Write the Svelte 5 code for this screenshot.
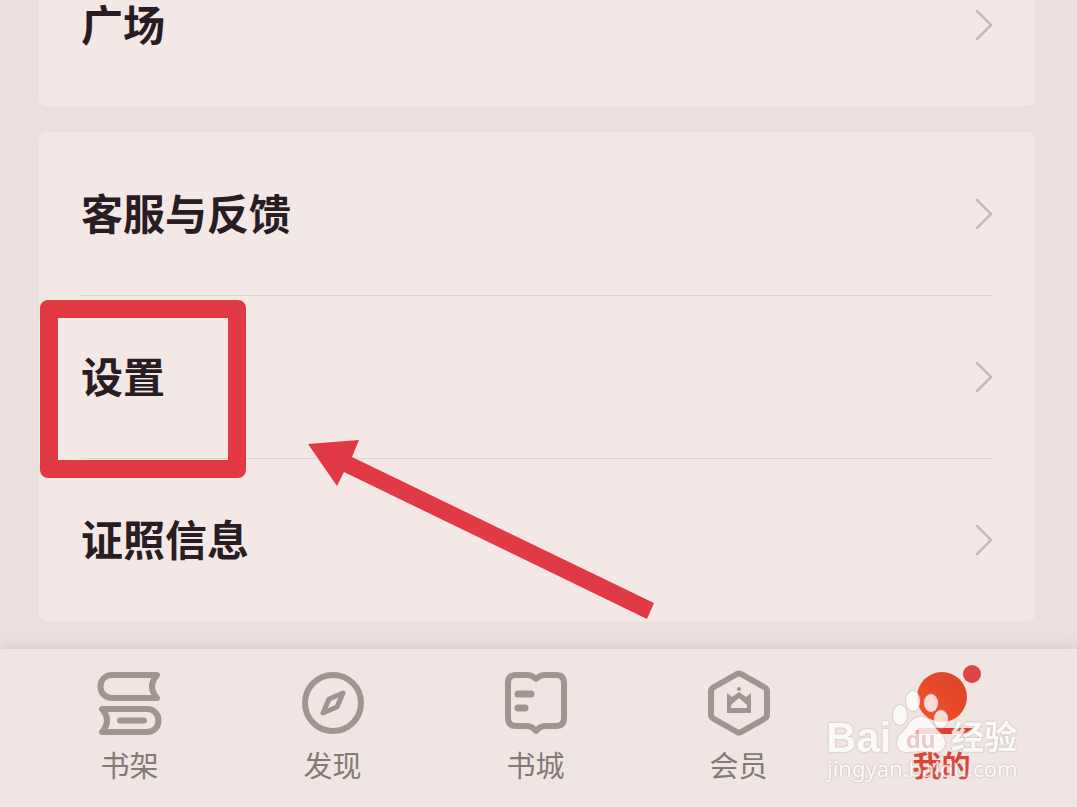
<script lang="ts">
	const groups = [['广场'], ['客服与反馈', '设置', '证照信息']];

	const tabs = [
		{ id: 'shelf', label: '书架' },
		{ id: 'discover', label: '发现' },
		{ id: 'store', label: '书城' },
		{ id: 'vip', label: '会员' },
		{ id: 'mine', label: '我的' }
	];

	const marked = '设置';
	let active = $state('mine');
</script>

<div class="page">
	<main class="content">
		{#each groups as group}
			<ul class="card">
				{#each group as item}
					<li class="item">
						<a class="row" href="#{item}">
							<span class="name">{item}</span>
							<svg class="chevron" viewBox="0 0 18 32" aria-hidden="true">
								<path d="M2 2 16 16 2 30" />
							</svg>
						</a>
						{#if item === marked}
							<div class="mark" aria-hidden="true"></div>
							<svg class="arrow" viewBox="0 0 346 180" aria-hidden="true">
								<path d="M0 4 51 0 44 17 346 163 339 179 36 32 29 46Z" />
							</svg>
						{/if}
					</li>
				{/each}
			</ul>
		{/each}
	</main>

	<nav class="tabbar">
		{#each tabs as tab}
			<button class="tab" class:active={active === tab.id} onclick={() => (active = tab.id)}>
				<svg class="icon" viewBox="0 0 64 64" aria-hidden="true">
					{#if tab.id === 'shelf'}
						<path d="M59 4H14C7 4 2.500 9 2.500 15.500S7 27 14 27h45q-10-11.500 0-23Z" />
						<path d="M4 38h45c7 0 11.500 5 11.500 11.500S56 61 49 61H4q10-11.500 0-23Z" />
						<path d="M22 49.500h24" />
					{:else if tab.id === 'discover'}
						<circle cx="32" cy="32" r="28" />
						<path class="thin" d="M42 22 28 28 22 42 36 36Z" />
					{:else if tab.id === 'store'}
						<path
							d="M12 4h11q5 0 9 4 4-4 9-4h11q8 0 8 8v35q0 8-8 8H41q-5 0-9 5-4-5-9-5H12q-8 0-8-8V12q0-8 8-8Z"
						/>
						<path class="bold" d="M14 23h13M14 37h7" />
					{:else if tab.id === 'vip'}
						<path d="M30 3q2-1 4 0l23 13q3 2 3 4v24q0 2-3 4L34 61q-2 1-4 0L7 48q-3-2-3-4V20q0-2 3-4Z" />
						<path
							class="crown"
							fill-rule="evenodd"
							d="M20 22l5 4 7-5 7 5 5-4v20H20ZM24 37h16v-3l-8-7-8 7Z"
						/>
						<circle class="dot" cx="32" cy="18" r="2" />
					{:else}
						<defs>
							<linearGradient id="sun" x1="1" y1="0" x2="0" y2="1">
								<stop offset="0" stop-color="#d9462a" />
								<stop offset="1" stop-color="#fa4d28" />
							</linearGradient>
						</defs>
						<circle class="head" cx="32" cy="26" r="25" fill="url(#sun)" />
						<path class="base" d="M8 57h50l5 0q-3 6-7 6H4Z" />
					{/if}
				</svg>
				<span>{tab.label}</span>
				{#if tab.id === 'mine'}
					<i class="badge"></i>
				{/if}
			</button>
		{/each}

		<svg class="watermark" viewBox="0 0 200 100" aria-hidden="true">
			<text class="brand" x="1" y="61">Bai</text>
			<g class="paw">
				<ellipse cx="75" cy="24" rx="7" ry="10" />
				<ellipse cx="88" cy="10" rx="7" ry="10" />
				<ellipse cx="106" cy="12" rx="7" ry="9" />
				<ellipse cx="116" cy="28" rx="7" ry="9" />
				<path
					d="M96 26c7 0 10 4 13 9 4 6 11 9 11 17 0 7-6 10-12 9-8-1-16-1-24 0-7 1-12-3-12-9 0-8 7-11 11-17 3-5 6-9 13-9Z"
				/>
			</g>
			<text class="du" x="81" y="57">du</text>
			<text class="cn" x="126" y="58">经验</text>
			<text class="url" x="2" y="86">jingyan.baidu.com</text>
		</svg>
	</nav>
</div>

<style>
	:global(body) {
		margin: 0;
		background: #ece0df;
	}

	.page {
		display: flex;
		flex-direction: column;
		min-height: 100vh;
		overflow: hidden;
		font-family: 'Noto Sans CJK SC', sans-serif;
		background: #ece0df;
	}

	/* list is scrolled, so the first card starts above the window */
	.content {
		display: flex;
		flex: 1;
		flex-direction: column;
		gap: 26px;
		margin-top: -57px;
		padding: 0 42px 28px 39px;
	}

	.card {
		margin: 0;
		padding: 0;
		list-style: none;
		border-radius: 8px;
		background: #f4e8e6;
	}

	.item {
		position: relative;
		padding: 0 42px;
	}

	.row {
		display: flex;
		align-items: center;
		justify-content: space-between;
		box-sizing: border-box;
		height: 163px;
		font-size: 42px;
		font-weight: 700;
		line-height: 60px;
		color: #291c22;
		text-decoration: none;
	}

	.item + .item .row {
		border-top: 1px solid #dfd3d1;
	}

	.name {
		padding-bottom: 4px;
	}

	.chevron {
		width: 18px;
		height: 32px;
		fill: none;
		stroke: #c5bab8;
		stroke-width: 2.5;
		stroke-linecap: round;
		stroke-linejoin: round;
	}

	.mark {
		position: absolute;
		top: 5px;
		left: 1px;
		z-index: 1;
		box-sizing: border-box;
		width: 206px;
		height: 178px;
		border: 18px solid #e23a44;
		border-radius: 8px;
		pointer-events: none;
	}

	.arrow {
		position: absolute;
		top: 145px;
		left: 269px;
		z-index: 1;
		width: 346px;
		height: 180px;
		fill: #e23a44;
		pointer-events: none;
	}

	.tabbar {
		position: relative;
		display: flex;
		padding: 22px 34px 27px 28px;
		background: #f1e5e3;
		box-shadow: 0 -2px 12px rgba(110, 80, 80, 0.16);
	}

	.tab {
		position: relative;
		display: flex;
		flex: 1;
		flex-direction: column;
		align-items: center;
		gap: 13px;
		padding: 0;
		border: 0;
		background: none;
		font-family: inherit;
		font-size: 29px;
		line-height: 32px;
		color: #857976;
		cursor: pointer;
	}

	.tab.active {
		font-weight: 700;
		color: #dc4435;
	}

	.icon {
		width: 64px;
		height: 64px;
		overflow: visible;
		fill: none;
		stroke: #a19592;
		stroke-width: 6;
		stroke-linecap: round;
		stroke-linejoin: round;
	}

	.icon .thin {
		stroke-width: 5;
	}

	.icon .bold {
		stroke-width: 7;
	}

	.icon .crown,
	.icon .dot {
		fill: #a19592;
		stroke: none;
	}

	.icon .head {
		stroke: none;
	}

	.icon .base {
		fill: #e0402c;
		stroke: none;
	}

	.badge {
		position: absolute;
		top: -6px;
		left: calc(50% + 21px);
		width: 18px;
		height: 18px;
		border-radius: 50%;
		background: #de4646;
	}

	.watermark {
		position: absolute;
		top: 42px;
		right: 52px;
		width: 200px;
		height: 100px;
		overflow: visible;
		fill: #fff;
		opacity: 0.8;
		filter: drop-shadow(0 0 1px #b0a4a2);
		pointer-events: none;
	}

	.brand {
		font: 700 42px 'Liberation Sans', sans-serif;
	}

	.du {
		font: 700 24px 'Liberation Sans', sans-serif;
		fill: #e8c4c0;
	}

	.cn {
		font: 700 33px 'Noto Sans CJK SC', sans-serif;
	}

	.url {
		font: 400 22px 'Noto Sans', sans-serif;
	}
</style>
